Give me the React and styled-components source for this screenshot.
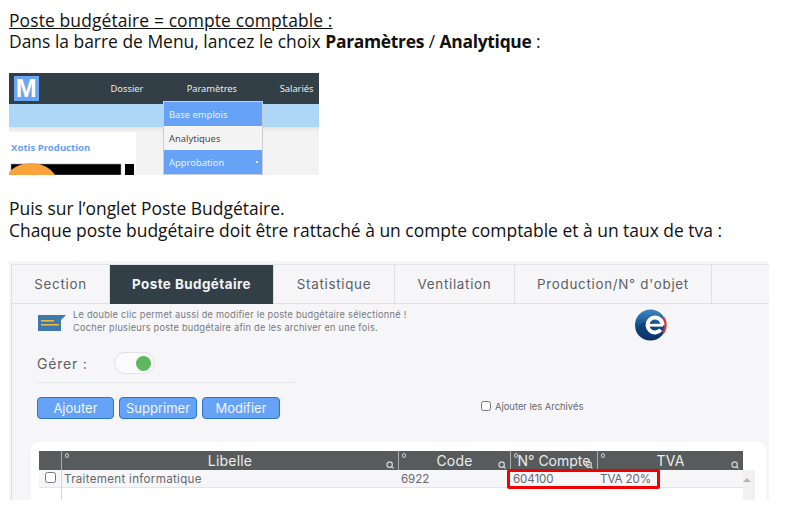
import styled, { createGlobalStyle } from "styled-components";
import { Search } from "lucide-react";

const GlobalStyle = createGlobalStyle`
  body {
    margin: 0;
    background: #fff;
    font-family: "Open Sans", "Noto Sans", sans-serif;
    color: #111;
  }
`;

const tabs = [
  { label: "Section", width: 98 },
  { label: "Poste Budgétaire", width: 164, active: true },
  { label: "Statistique", width: 121 },
  { label: "Ventilation", width: 120 },
  { label: "Production/N° d'objet", width: 197 },
];

const columns = [
  { label: "Libelle", width: 337 },
  { label: "Code", width: 112 },
  { label: "N° Compte", width: 87, tight: true },
  { label: "TVA", width: 146 },
];

export default function App() {
  return (
    <>
      <GlobalStyle />
      <Page>
        <Heading>
          <u>Poste budgétaire = compte comptable :</u>
          <br />
          Dans la barre de Menu, lancez le choix <b>Paramètres</b> / <b>Analytique</b> :
        </Heading>

        <MenuShot>
          <NavBar>
            <Logo>M</Logo>
            <NavItem $width={54} $left={77}>Dossier</NavItem>
            <NavItem $width={54} $left={28}>Paramètres</NavItem>
            <NavItem $width={40} $left={45}>Salariés</NavItem>
          </NavBar>
          <BlueBand />
          <ShotBody>
            <ProductionCard>
              <CardTitle>Xotis Production</CardTitle>
              <CardPicture viewBox="0 0 127 21" aria-hidden="true">
                <rect x="2" y="10" width="110" height="11" fill="#000" stroke="#999" strokeWidth="0.6" />
                <rect x="116" y="10" width="9" height="11" fill="#000" />
                <ellipse cx="22" cy="31" rx="27" ry="22" fill="#f9a33c" />
              </CardPicture>
            </ProductionCard>
          </ShotBody>
          <DropMenu>
            <DropItem $active>Base emplois</DropItem>
            <DropItem>Analytiques</DropItem>
            <DropItem $active>
              Approbation
              <Dot />
            </DropItem>
          </DropMenu>
        </MenuShot>

        <Heading $top={22} $line={22}>
          Puis sur l’onglet Poste Budgétaire.
          <br />
          Chaque poste budgétaire doit être rattaché à un compte comptable et à un taux de tva :
        </Heading>

        <AppShot>
          <Panel>
            <TabBar>
              {tabs.map((tab) => (
                <Tab key={tab.label} $width={tab.width} $active={tab.active}>
                  {tab.label}
                </Tab>
              ))}
            </TabBar>

            <Content>
              <HintRow>
                <HintIcon viewBox="0 0 28 18" aria-hidden="true">
                  <path d="M0 1H28L23 6V17H0Z" fill="#3f78ad" />
                  <rect x="3" y="6" width="13" height="1.6" fill="#e8b93f" />
                  <rect x="3" y="10" width="18" height="1.6" fill="#e8b93f" />
                </HintIcon>
                <HintText>
                  Le double clic permet aussi de modifier le poste budgétaire sélectionné !
                  <br />
                  Cocher plusieurs poste budgétaire afin de les archiver en une fois.
                </HintText>
                <EmploiLogo viewBox="0 0 34 32" aria-hidden="true">
                  <defs>
                    <linearGradient id="ball" x1="0" y1="0" x2="0" y2="1">
                      <stop offset="0" stopColor="#3f86bf" />
                      <stop offset="0.5" stopColor="#16508c" />
                      <stop offset="1" stopColor="#0d2c5c" />
                    </linearGradient>
                  </defs>
                  <circle cx="16.5" cy="16" r="15.5" fill="url(#ball)" />
                  <path d="M1.5 20C7 13 14 12 20 13V29C10 33 3 27 1.5 20Z" fill="#0f3a72" opacity="0.55" />
                  <path d="M29.5 8.5A15 15 0 0 1 29.5 23.5" fill="none" stroke="#e2332f" strokeWidth="2.2" />
                  <circle cx="21" cy="16" r="7.5" fill="none" stroke="#fff" strokeWidth="4" strokeDasharray="41.9 5.2" transform="rotate(40 21 16)" />
                  <rect x="14" y="14.8" width="15" height="2.8" fill="#fff" />
                </EmploiLogo>
              </HintRow>

              <ManageRow>
                <ManageLabel>Gérer :</ManageLabel>
                <Toggle>
                  <ToggleKnob />
                </Toggle>
              </ManageRow>
              <Separator />

              <ActionRow>
                <ActionButton $width={77}>Ajouter</ActionButton>
                <ActionButton $width={78}>Supprimer</ActionButton>
                <ActionButton $width={78}>Modifier</ActionButton>
                <ArchiveLabel>
                  <ArchiveBox type="checkbox" readOnly />
                  Ajouter les Archivés
                </ArchiveLabel>
              </ActionRow>

              <GridCard>
                <GridTable>
                  <HeaderRow>
                    <CheckHead />
                    {columns.map((col) => (
                      <HeadCell key={col.label} $width={col.width} $tight={col.tight}>
                        <SortMark />
                        {col.label}
                        <HeadSearch size={8} strokeWidth={4} />
                      </HeadCell>
                    ))}
                  </HeaderRow>
                  <BodyRow>
                    <CheckCell>
                      <RowBox type="checkbox" readOnly />
                    </CheckCell>
                    <BodyCell $width={337} $first>Traitement informatique</BodyCell>
                    <BodyCell $width={112} $compact>6922</BodyCell>
                    <BodyCell $width={87} $compact>604100</BodyCell>
                    <BodyCell $width={146} $compact>TVA 20%</BodyCell>
                    <RedFrame />
                  </BodyRow>
                  <EmptyRow />
                  <ScrollTrack>
                    <ScrollArrow />
                  </ScrollTrack>
                </GridTable>
              </GridCard>
            </Content>
          </Panel>
        </AppShot>
      </Page>
    </>
  );
}

const Page = styled.div`
  width: 809px;
  height: 528px;
  padding: 10px 0 0 9px;
  box-sizing: border-box;
  overflow: hidden;
`;

const Heading = styled.p`
  margin: ${(p) => p.$top || 0}px 0 0;
  font-size: 17.45px;
  line-height: ${(p) => p.$line || 21}px;
  white-space: nowrap;
  u {
    letter-spacing: 0.12px;
  }
  b {
    font-weight: 700;
    letter-spacing: -0.3px;
  }
`;

const MenuShot = styled.div`
  position: relative;
  width: 310px;
  height: 102px;
  margin-top: 21px;
  background: #f3f3f3;
  overflow: hidden;
  font-family: "Noto Sans", sans-serif;
`;

const NavBar = styled.div`
  display: flex;
  align-items: center;
  height: 31px;
  padding-left: 5px;
  background: #323f47;
`;

const Logo = styled.div`
  width: 25px;
  height: 25px;
  background: #6ba5f5;
  color: #fff;
  font: 700 25px/25px "Liberation Sans", sans-serif;
  text-align: center;
`;

const NavItem = styled.div`
  width: ${(p) => p.$width}px;
  margin-left: ${(p) => p.$left - 5}px;
  color: #e8ecee;
  font-size: 9.3px;
  white-space: nowrap;
`;

const BlueBand = styled.div`
  height: 23px;
  background: #aed6f7;
`;

const ShotBody = styled.div`
  height: 48px;
  padding-top: 5px;
  box-sizing: border-box;
  background: linear-gradient(#e4e4e4, #f3f3f3 5px);
`;

const ProductionCard = styled.div`
  width: 127px;
  height: 43px;
  background: #fff;
`;

const CardTitle = styled.div`
  padding: 9px 0 0 2px;
  color: #659ff2;
  font-size: 9.6px;
  font-weight: 700;
  line-height: 13px;
`;

const CardPicture = styled.svg`
  display: block;
  width: 127px;
  height: 21px;
`;

const DropMenu = styled.div`
  position: absolute;
  left: 154px;
  top: 28px;
  width: 100px;
  border: 1px solid #c8ced4;
  box-sizing: border-box;
  background: #f4f4f4;
`;

const DropItem = styled.div`
  position: relative;
  height: 24px;
  padding-left: 5px;
  background: ${(p) => (p.$active ? "#66a2f6" : "transparent")};
  color: ${(p) => (p.$active ? "#e9f2fe" : "#4a4a4a")};
  font-size: 9.4px;
  line-height: 25px;
`;

const Dot = styled.span`
  position: absolute;
  right: 4px;
  top: 11px;
  width: 2px;
  height: 2px;
  background: #dfeafc;
`;

const AppShot = styled.div`
  width: 760px;
  height: 239px;
  margin-top: 20px;
  padding: 3px 0 0 2px;
  box-sizing: border-box;
  background: #f6f6f9;
  overflow: hidden;
  font-family: Inter, "Open Sans", sans-serif;
`;

const Panel = styled.div`
  height: 236px;
  border-left: 1px solid #dfe0e3;
`;

const TabBar = styled.div`
  display: flex;
  height: 40px;
  box-sizing: border-box;
  border-top: 1px solid #e4e5e8;
  border-bottom: 1px solid #dfe0e3;
`;

const Tab = styled.div`
  width: ${(p) => p.$width}px;
  margin-bottom: -1px;
  box-sizing: border-box;
  border-right: 1px solid #dfe0e3;
  background: ${(p) => (p.$active ? "#323f47" : "transparent")};
  color: ${(p) => (p.$active ? "#f3f4f5" : "#5c5f63")};
  font-size: 13.4px;
  font-weight: ${(p) => (p.$active ? 700 : 400)};
  letter-spacing: ${(p) => (p.$active ? "0.45px" : "0.7px")};
  line-height: 39px;
  text-align: center;
  white-space: nowrap;
`;

const Content = styled.div`
  padding: 5px 0 0 25px;
`;

const HintRow = styled.div`
  display: flex;
  align-items: flex-start;
  height: 36px;
  padding-left: 1px;
`;

const HintIcon = styled.svg`
  flex: none;
  width: 28px;
  height: 18px;
  margin-top: 5px;
`;

const HintText = styled.div`
  width: 561px;
  margin: -1px 0 0 7px;
  color: #77797d;
  font-size: 9.2px;
  line-height: 13px;
  letter-spacing: 0.25px;
  white-space: nowrap;
`;

const EmploiLogo = styled.svg`
  flex: none;
  width: 34px;
  height: 32px;
`;

const ManageRow = styled.div`
  display: flex;
  align-items: center;
  height: 22px;
  margin-top: 7px;
`;

const ManageLabel = styled.div`
  width: 77px;
  color: #5c5f63;
  font-size: 14px;
  letter-spacing: 0.8px;
`;

const Toggle = styled.div`
  display: flex;
  justify-content: flex-end;
  align-items: center;
  width: 41px;
  height: 22px;
  padding-right: 3px;
  box-sizing: border-box;
  border: 1px solid #e2e3e6;
  border-radius: 11px;
  background: #fbfbfc;
`;

const ToggleKnob = styled.span`
  width: 15px;
  height: 15px;
  border-radius: 50%;
  background: #5cb85c;
`;

const Separator = styled.div`
  width: 258px;
  height: 1px;
  margin-top: 8px;
  background: #e7e8ea;
`;

const ActionRow = styled.div`
  display: flex;
  align-items: center;
  gap: 5px;
  height: 22px;
  margin-top: 14px;
`;

const ActionButton = styled.div`
  width: ${(p) => p.$width}px;
  height: 22px;
  box-sizing: border-box;
  border: 1px solid #2f74c0;
  border-radius: 4px;
  background: #66a2f6;
  color: #f2f7fe;
  font-size: 13px;
  line-height: 20px;
  text-align: center;
`;

const ArchiveLabel = styled.label`
  display: flex;
  align-items: center;
  gap: 4px;
  margin: -4px 0 0 196px;
  color: #66686c;
  font-size: 9.4px;
  white-space: nowrap;
`;

const ArchiveBox = styled.input`
  width: 10px;
  height: 10px;
  margin: 0;
`;

const GridCard = styled.div`
  width: 735px;
  height: 80px;
  margin: 23px 0 0 -6px;
  padding: 9px 0 0 8px;
  box-sizing: border-box;
  border-radius: 8px 8px 0 0;
  background: #fff;
`;

const GridTable = styled.div`
  position: relative;
  width: 704px;
`;

const HeaderRow = styled.div`
  display: flex;
  height: 19px;
  background: #585b5c;
`;

const CheckHead = styled.div`
  width: 22px;
`;

const HeadCell = styled.div`
  position: relative;
  width: ${(p) => p.$width}px;
  box-sizing: border-box;
  border-left: 1px solid #a9abad;
  color: #eceded;
  font-size: 14px;
  line-height: 19px;
  text-align: center;
  white-space: nowrap;
  letter-spacing: ${(p) => (p.$tight ? "0" : "0.2px")};
`;

const SortMark = styled.span`
  position: absolute;
  left: 3px;
  top: 2px;
  width: 2px;
  height: 3px;
  border: 1px solid #c9cbcc;
  border-radius: 2px;
`;

const HeadSearch = styled(Search)`
  position: absolute;
  right: 4px;
  bottom: 1px;
  color: #c9cbcc;
`;

const BodyRow = styled.div`
  position: relative;
  display: flex;
  height: 18px;
  box-sizing: border-box;
  border-bottom: 1px solid #e3e4e8;
  background: #f6f6f9;
`;

const CheckCell = styled.div`
  width: 22px;
  padding-left: 6px;
  box-sizing: border-box;
`;

const RowBox = styled.input`
  display: block;
  width: 11px;
  height: 11px;
  margin: 2px 0 0;
`;

const BodyCell = styled.div`
  width: ${(p) => p.$width}px;
  padding-left: ${(p) => (p.$first ? 2 : 3)}px;
  box-sizing: border-box;
  border-left: ${(p) => (p.$first ? "1px solid #d5d6d9" : "none")};
  color: #66686c;
  font-size: 11.6px;
  line-height: 18px;
  letter-spacing: ${(p) => (p.$compact ? "-0.1px" : "0.3px")};
  white-space: nowrap;
`;

const RedFrame = styled.div`
  position: absolute;
  left: 468px;
  top: -1px;
  width: 153px;
  height: 20px;
  box-sizing: border-box;
  border: 3px solid #f00000;
  border-radius: 2px;
`;

const EmptyRow = styled.div`
  height: 12px;
  margin-left: 22px;
  border-left: 1px solid #d5d6d9;
`;

const ScrollTrack = styled.div`
  position: absolute;
  left: 704px;
  top: 19px;
  width: 12px;
  height: 30px;
  background: #f1f1f1;
`;

const ScrollArrow = styled.div`
  width: 0;
  margin: 8px 0 0 0;
  border: 4px solid transparent;
  border-top: 0;
  border-bottom: 4px solid #b3b3b3;
`;
